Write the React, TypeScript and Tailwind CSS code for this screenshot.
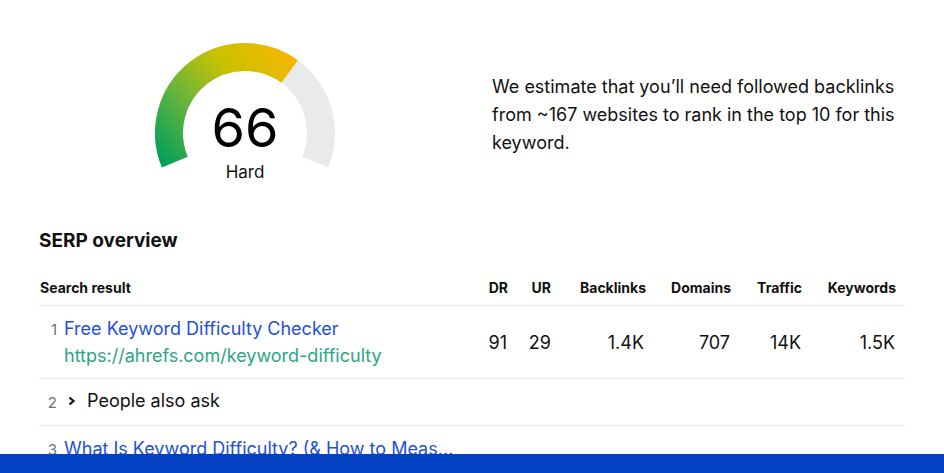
import React from 'react';

// Gauge geometry
const CX = 90;
const CY = 90;
const R = 76;
const START = 202.5;
const SWEEP = 225;

const point = (deg: number) => {
  const rad = (deg * Math.PI) / 180;
  return [CX + R * Math.cos(rad), CY - R * Math.sin(rad)];
};

const arc = (from: number, to: number) => {
  const [x1, y1] = point(from);
  const [x2, y2] = point(to);
  const large = from - to > 180 ? 1 : 0;
  return `M ${x1} ${y1} A ${R} ${R} 0 ${large} 1 ${x2} ${y2}`;
};

const Gauge: React.FC<{ value: number; label: string }> = ({ value, label }) => {
  const end = START - (SWEEP * value) / 100;
  return (
    <div className="relative w-[180px] h-[150px]">
      <svg width="180" height="150" viewBox="0 0 180 150">
        <defs>
          <linearGradient id="kd" gradientUnits="userSpaceOnUse" x1="20" y1="135" x2="150" y2="25">
            <stop offset="0" stopColor="#00a05a" />
            <stop offset="0.35" stopColor="#6db53a" />
            <stop offset="0.65" stopColor="#c9c200" />
            <stop offset="1" stopColor="#f7b600" />
          </linearGradient>
        </defs>
        <path d={arc(START, START - SWEEP)} fill="none" stroke="#e9eaec" strokeWidth="28" />
        <path d={arc(START, end)} fill="none" stroke="url(#kd)" strokeWidth="28" />
      </svg>
      <div className="absolute inset-x-0 top-[54px] flex flex-col items-center">
        <span className="text-[54px] leading-[62px] text-black">{value}</span>
        <span className="text-[17px] leading-[22px] mt-[2px] text-[#111]">{label}</span>
      </div>
    </div>
  );
};

interface SerpRow {
  pos: number;
  title?: string;
  url?: string;
  feature?: string;
  dr?: string;
  ur?: string;
  backlinks?: string;
  domains?: string;
  traffic?: string;
  keywords?: string;
}

const ROWS: SerpRow[] = [
  {
    pos: 1,
    title: 'Free Keyword Difficulty Checker',
    url: 'https://ahrefs.com/keyword-difficulty',
    dr: '91',
    ur: '29',
    backlinks: '1.4K',
    domains: '707',
    traffic: '14K',
    keywords: '1.5K'
  },
  { pos: 2, feature: 'People also ask' },
  { pos: 3, title: 'What Is Keyword Difficulty? (& How to Meas...' }
];

const GRID = 'grid grid-cols-[1fr_40px_43px_95px_85px_71px_94px] pr-[9px]';

const App: React.FC = () => {
  return (
    <div className="relative w-[944px] h-[473px] overflow-hidden bg-white text-[#111] font-['Inter',sans-serif]">
      <div className="px-[39px] pt-[43px]">
        {/* Difficulty summary */}
        <div className="flex items-start">
          <div className="w-[412px] shrink-0 flex justify-center">
            <Gauge value={66} label="Hard" />
          </div>
          <p className="ml-[41px] mt-[30px] w-[410px] shrink-0 text-[18px] leading-[28px]">
            We estimate that you’ll need followed backlinks from ~167 websites to rank in the top 10 for this keyword.
          </p>
        </div>

        {/* SERP overview */}
        <h2 className="mt-[36px] text-[19px] leading-[24px] font-bold">SERP overview</h2>

        <div className={`${GRID} mt-[16px] h-[37px] items-center border-b border-[#e5e7eb] text-[14px] font-bold`}>
          <div className="pl-[1px]">Search result</div>
          <div className="text-right">DR</div>
          <div className="text-right">UR</div>
          <div className="text-right">Backlinks</div>
          <div className="text-right">Domains</div>
          <div className="text-right">Traffic</div>
          <div className="text-right">Keywords</div>
        </div>

        {ROWS.map(row => (
          <div
            key={row.pos}
            className={`${GRID} items-center border-b border-[#e5e7eb] text-[18px] ${row.url ? 'h-[73px]' : 'h-[47px]'}`}
          >
            <div className="flex items-start">
              <span className="w-[18px] text-right text-[15px] leading-[26px] text-[#6b7280] pt-[2px]">{row.pos}</span>
              {row.feature ? (
                <div className="flex items-center ml-[10px] leading-[26px]">
                  <svg width="10" height="12" viewBox="0 0 10 12" className="mr-[10px]">
                    <path d="M2.5 2.5 L6.5 6 L2.5 9.5" fill="none" stroke="#111" strokeWidth="2.2" />
                  </svg>
                  <span>{row.feature}</span>
                </div>
              ) : (
                <div className="ml-[7px] flex flex-col leading-[27px]">
                  <span className="text-[#1f4fdb]">{row.title}</span>
                  {row.url && <span className="text-[#2ea485]">{row.url}</span>}
                </div>
              )}
            </div>
            <div className="text-right pr-[1px]">{row.dr}</div>
            <div className="text-right">{row.ur}</div>
            <div className="text-right pr-[2px]">{row.backlinks}</div>
            <div className="text-right pr-[1px]">{row.domains}</div>
            <div className="text-right pr-[1px]">{row.traffic}</div>
            <div className="text-right pr-[1px]">{row.keywords}</div>
          </div>
        ))}
      </div>

      {/* Bottom bar overlay */}
      <div className="absolute left-0 right-0 bottom-0 h-[19px] bg-[#0340c2]" />
    </div>
  );
};

export default App;
